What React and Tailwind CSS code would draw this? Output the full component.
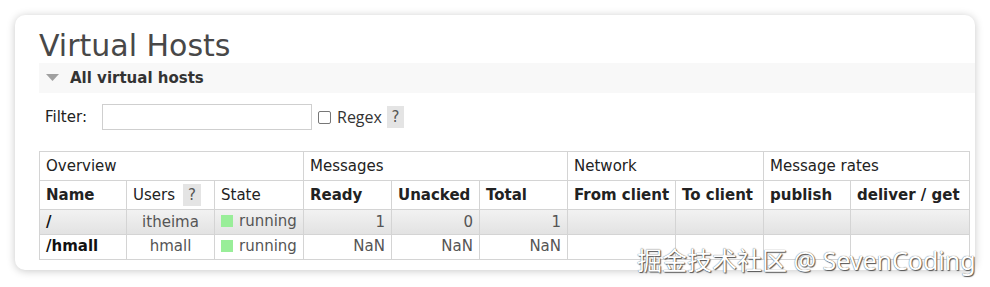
import React from "react";

const COLS = [87, 88, 89, 88, 88, 88, 108, 88, 87, 119];

const ROWS = [
  { name: "/", user: "itheima", ready: "1", unacked: "0", total: "1", shade: true },
  { name: "/hmall", user: "hmall", ready: "NaN", unacked: "NaN", total: "NaN", shade: false },
];

function Help({ className = "" }) {
  return (
    <span className={`inline-flex items-center justify-center bg-[#e4e4e4] text-[#555] ${className}`}>?</span>
  );
}

export default function App() {
  const cell = "border border-[#d4d4d4] px-[6px] whitespace-nowrap overflow-hidden";
  return (
    <div className="w-[990px] h-[287px] bg-white pt-[15px] pl-[15px] overflow-hidden relative" style={{ fontFamily: "'DejaVu Sans', Verdana, sans-serif" }}>
      <div className="w-[960px] h-[255px] bg-white rounded-[10px] shadow-[0_1px_8px_rgba(0,0,0,0.22)] pl-[24px] pt-[13px]">
        {/* Title */}
        <h1 className="text-[30px] leading-[36px] text-[#484848]">Virtual Hosts</h1>

        {/* Section header */}
        <div className="h-[30px] mt-[-1px] bg-[#f8f8f8] flex items-center pl-[7px] gap-[11px]">
          <svg width="13" height="8" viewBox="0 0 13 8">
            <polygon points="0,0 13,0 6.5,7" fill="#a0a0a0" />
          </svg>
          <span className="text-[15px] font-bold text-[#333]">All virtual hosts</span>
        </div>

        {/* Filter */}
        <div className="flex items-center h-[26px] mt-[11px] pl-[6px]">
          <span className="text-[15px] text-[#222] w-[57px] pt-[1px]">Filter:</span>
          <div className="w-[210px] h-[26px] border border-[#cfcfcf] bg-white" />
          <span className="ml-[6px] w-[13px] h-[13px] rounded-[2px] border border-[#777] bg-white" />
          <span className="ml-[6px] text-[16px] text-[#333]" style={{ fontFamily: "'Open Sans', sans-serif" }}>Regex</span>
          <Help className="ml-[5px] w-[17px] h-[22px] text-[15px]" />
        </div>

        {/* Table */}
        <table className="mt-[21px] border-collapse table-fixed w-[930px] text-[15px] text-[#222]">
          <colgroup>
            {COLS.map((w, i) => (
              <col key={i} style={{ width: w }} />
            ))}
          </colgroup>
          <thead>
            <tr className="h-[29px] text-left">
              <th colSpan={3} className={`${cell} font-normal`}>Overview</th>
              <th colSpan={3} className={`${cell} font-normal`}>Messages</th>
              <th colSpan={2} className={`${cell} font-normal`}>Network</th>
              <th colSpan={2} className={`${cell} font-normal`}>Message rates</th>
            </tr>
            <tr className="h-[29px] text-left">
              <th className={`${cell} font-bold`}>Name</th>
              <th className={`${cell} font-normal`}>
                <span className="inline-flex items-center">
                  Users <Help className="ml-[8px] w-[18px] h-[22px]" />
                </span>
              </th>
              <th className={`${cell} font-normal`}>State</th>
              <th className={`${cell} font-bold`}>Ready</th>
              <th className={`${cell} font-bold`}>Unacked</th>
              <th className={`${cell} font-bold`}>Total</th>
              <th className={`${cell} font-bold`}>From client</th>
              <th className={`${cell} font-bold`}>To client</th>
              <th className={`${cell} font-bold`}>publish</th>
              <th className={`${cell} font-bold`}>deliver / get</th>
            </tr>
          </thead>
          <tbody>
            {ROWS.map((r) => (
              <tr key={r.name} className={`h-[24px] ${r.shade ? "bg-gradient-to-b from-[#f2f2f2] to-[#e2e2e2]" : "bg-white"}`}>
                <td className={`${cell} font-bold text-[#111]`}>{r.name}</td>
                <td className={`${cell} text-center text-[#555]`}>{r.user}</td>
                <td className={`${cell} text-[#555]`}>
                  <span className="inline-flex items-center gap-[6px]">
                    <span className="w-[12px] h-[12px] bg-[#99ee99]" />
                    running
                  </span>
                </td>
                <td className={`${cell} text-right text-[#555]`}>{r.ready}</td>
                <td className={`${cell} text-right text-[#555]`}>{r.unacked}</td>
                <td className={`${cell} text-right text-[#555]`}>{r.total}</td>
                <td className={cell} />
                <td className={cell} />
                <td className={cell} />
                <td className={cell} />
              </tr>
            ))}
          </tbody>
        </table>
      </div>

      {/* Watermark */}
      <div
        className="absolute left-[637px] top-[242px] text-[25px] text-white whitespace-nowrap"
        style={{ fontFamily: "'Noto Sans', 'Noto Sans CJK SC', sans-serif", textShadow: "0 0 1px #444, 1px 1px 1px #555" }}
      >
        掘金技术社区 @ SevenCoding
      </div>
    </div>
  );
}
